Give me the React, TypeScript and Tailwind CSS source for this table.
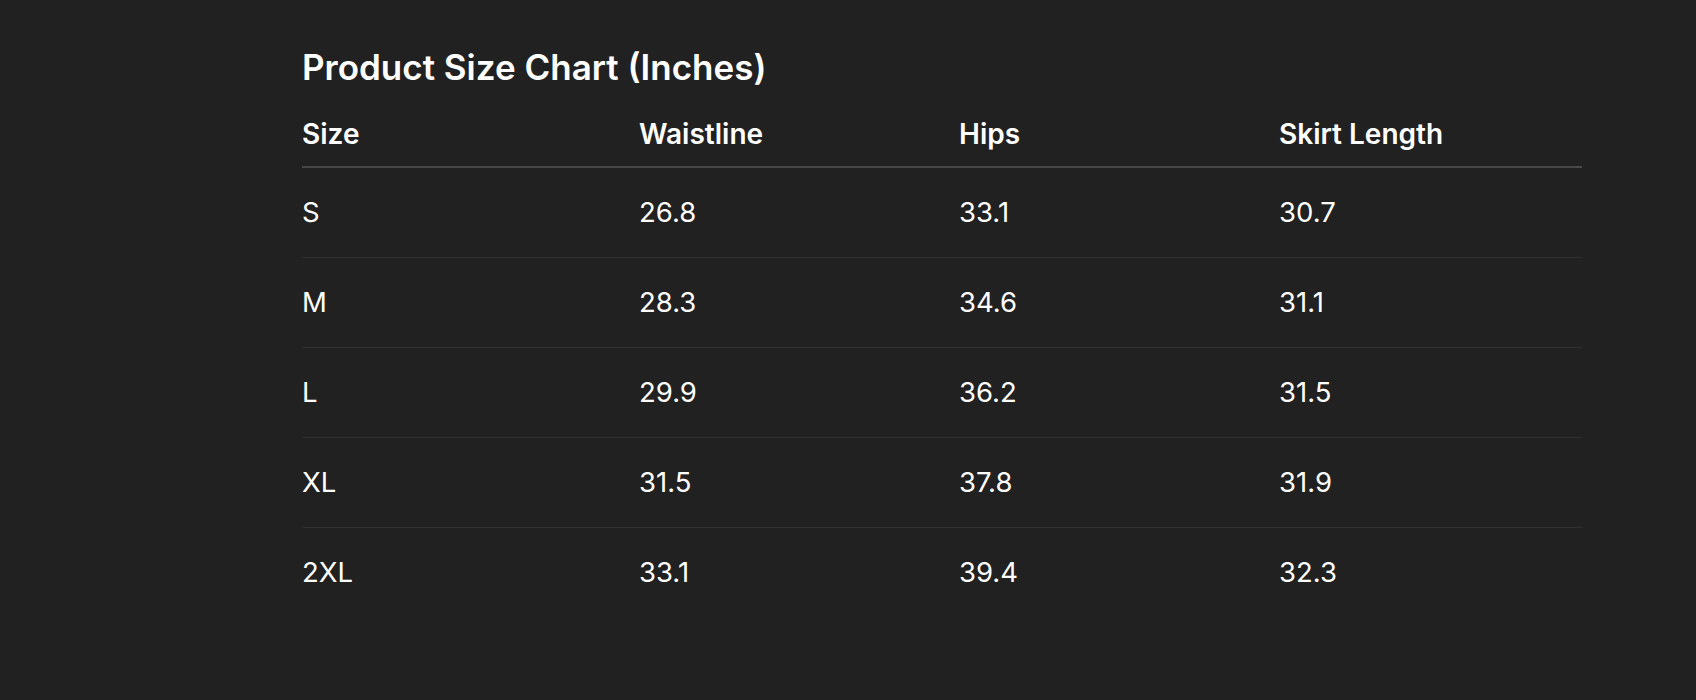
const ROWS = [
  { size: "S", waist: "26.8", hips: "33.1", length: "30.7" },
  { size: "M", waist: "28.3", hips: "34.6", length: "31.1" },
  { size: "L", waist: "29.9", hips: "36.2", length: "31.5" },
  { size: "XL", waist: "31.5", hips: "37.8", length: "31.9" },
  { size: "2XL", waist: "33.1", hips: "39.4", length: "32.3" },
];

export default function App() {
  return (
    <div className="min-h-[700px] w-full bg-[#212121] text-white font-['Inter',sans-serif]">
      <div className="ml-[302px] w-[1280px] pt-[47px]">
        <h2 className="text-[35px] leading-[40px] font-semibold mb-[31px]">
          Product Size Chart (Inches)
        </h2>

        <table className="w-full table-fixed border-collapse text-left">
          <colgroup>
            <col className="w-[337px]" />
            <col className="w-[320px]" />
            <col className="w-[320px]" />
            <col className="w-[303px]" />
          </colgroup>
          <thead>
            <tr className="border-b-2 border-[#484848]">
              {["Size", "Waistline", "Hips", "Skirt Length"].map((h) => (
                <th key={h} className="p-0 pb-[16px] text-[28px] leading-[32px] font-semibold">
                  {h}
                </th>
              ))}
            </tr>
          </thead>
          <tbody>
            {ROWS.map((r, i) => (
              <tr key={r.size} className={i < ROWS.length - 1 ? "border-b border-[#303030]" : ""}>
                {[r.size, r.waist, r.hips, r.length].map((v, j) => (
                  <td key={j} className="px-0 py-[29px] text-[27.5px] leading-[31px] font-normal">
                    {v}
                  </td>
                ))}
              </tr>
            ))}
          </tbody>
        </table>
      </div>
    </div>
  );
}
